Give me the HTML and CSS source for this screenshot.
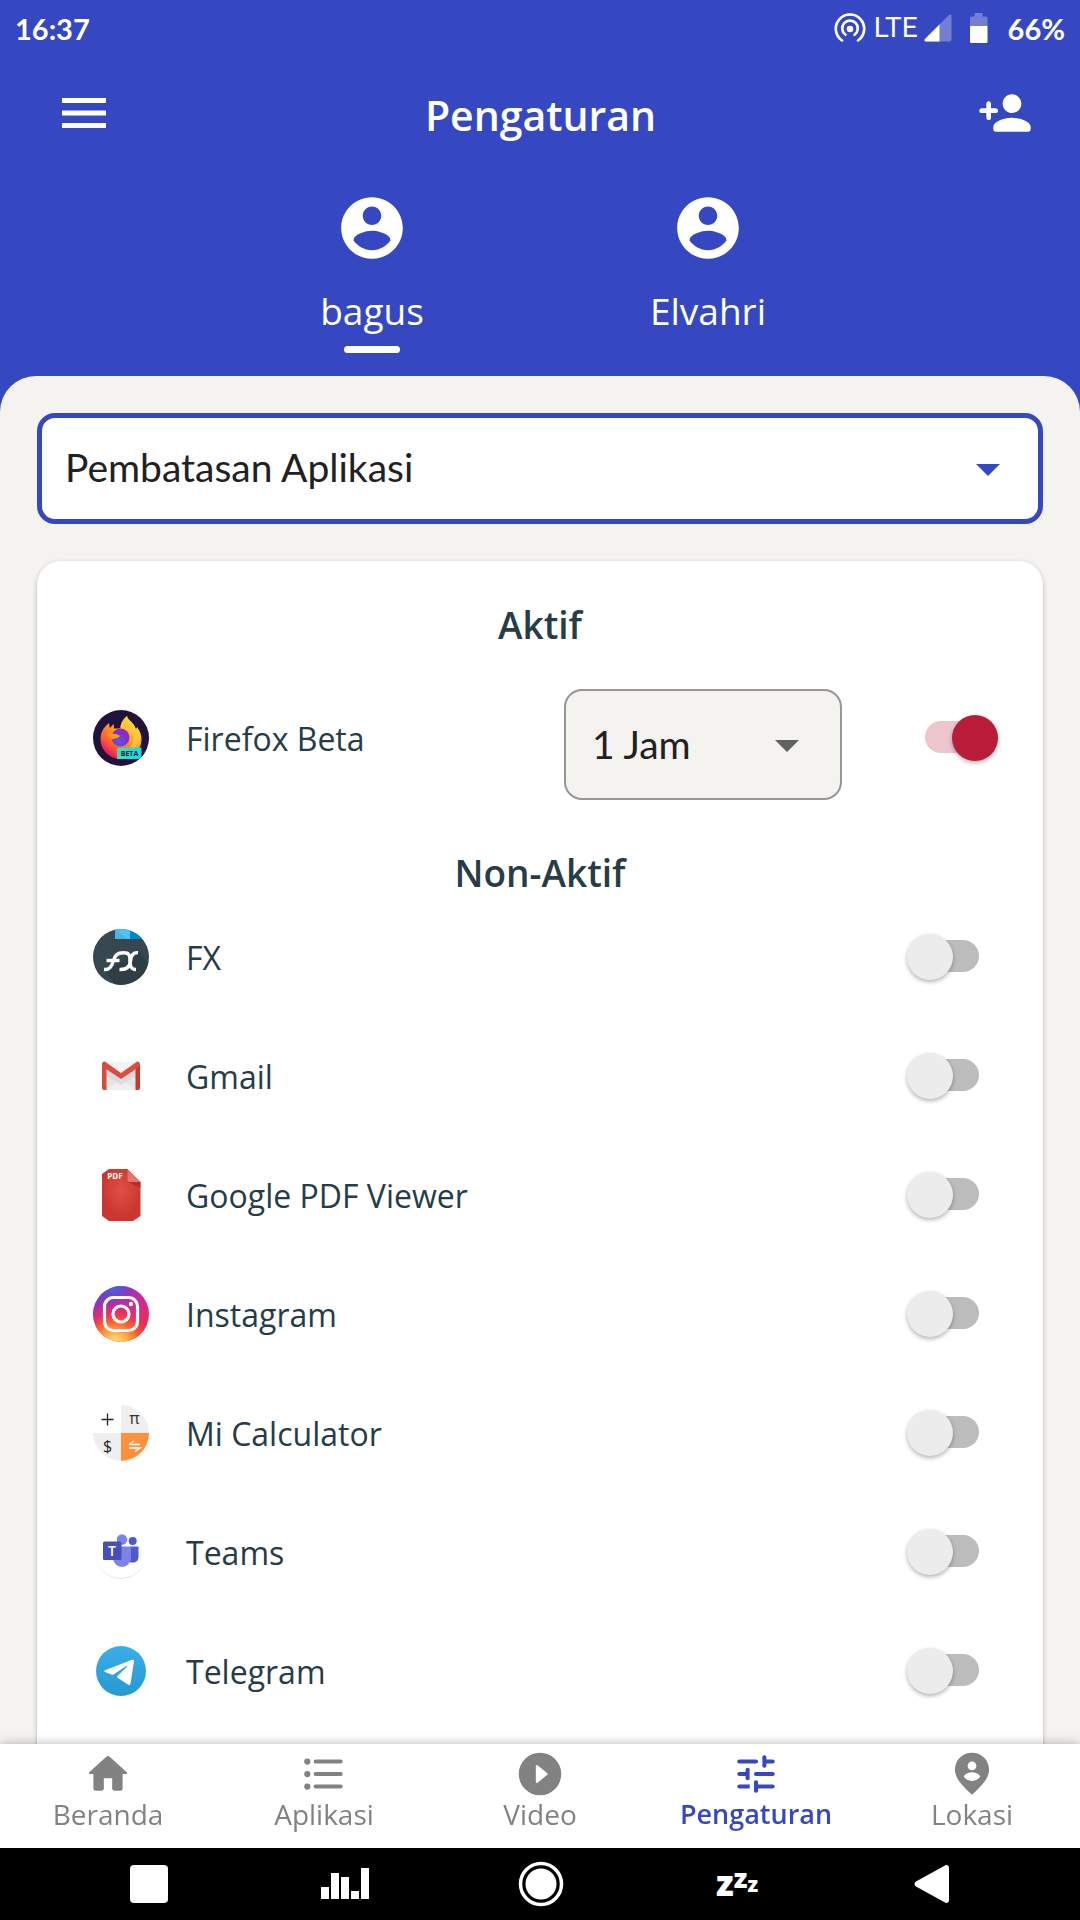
FILE: index.html
```html
<!DOCTYPE html>
<html lang="id">
<head>
<meta charset="utf-8">
<meta name="viewport" content="width=device-width, initial-scale=1">
<title>Pengaturan</title>
<link rel="stylesheet" href="styles.css">
</head>
<body>
<div class="app">
  <header class="header">
    <div class="status">
      <span class="status-time">16:37</span>
      <div class="status-icons">
        <svg class="hotspot" viewBox="0 0 32 32" aria-hidden="true"><g fill="none" stroke="#fff" stroke-width="2.600" stroke-linecap="round"><path d="M8 28.500a14.200 14.200 0 1 1 16 0"/><path d="M11.500 22.800a7.800 7.800 0 1 1 9 0"/></g><circle cx="16" cy="17" r="3.300" fill="#fff"/></svg>
        <span class="status-net">LTE</span>
        <svg class="signal" viewBox="0 0 28 28" aria-hidden="true"><path d="M27.500 2v23.500a2 2 0 0 1-2 2H2c-1.500 0-2-1.500-1-2.500L25 1c1-1 2.500-.5 2.500 1z" fill="#fff" opacity=".3"/><path d="M15.500 10.500v17H2c-1.500 0-2-1.500-1-2.500z" fill="#fff"/></svg>
        <svg class="battery" viewBox="0 0 18 30" aria-hidden="true"><path d="M4.500 0h8v3.500H16a1.500 1.500 0 0 1 1.500 1.500v8H0V5a1.500 1.500 0 0 1 1.500-1.500h3z" fill="#fff" opacity=".3"/><path d="M0 13h17.500v15.500a1.500 1.500 0 0 1-1.500 1.500H1.500A1.500 1.500 0 0 1 0 28.500z" fill="#fff"/></svg>
        <span class="status-level">66%</span>
      </div>
    </div>
    <div class="appbar">
      <button class="icon-button" type="button" aria-label="Menu">
        <svg class="menu-icon" viewBox="0 0 44 30"><path d="M0 0h44v5H0zM0 12.500h44v5H0zM0 25h44v5H0z" fill="#fff"/></svg>
      </button>
      <h1 class="title">Pengaturan</h1>
      <button class="icon-button" type="button" aria-label="Tambah anak">
        <svg class="add-icon" viewBox="0 0 24 24"><path fill="#fff" d="M15 12c2.210 0 4-1.790 4-4s-1.790-4-4-4-4 1.790-4 4 1.790 4 4 4zm-9-2V8c0-.55-.45-1-1-1s-1 .45-1 1v2H2c-.55 0-1 .45-1 1s.45 1 1 1h2v2c0 .55.45 1 1 1s1-.45 1-1v-2h2c.55 0 1-.45 1-1s-.45-1-1-1H6zm9 4c-2.670 0-8 1.340-8 4v1c0 .55.45 1 1 1h14c.55 0 1-.45 1-1v-1c0-2.660-5.330-4-8-4z"/></svg>
      </button>
    </div>
    <div class="profiles">
      <button class="profile profile-active" type="button">
        <svg class="avatar" viewBox="0 0 24 24"><path fill="#fff" d="M12 2C6.480 2 2 6.480 2 12s4.480 10 10 10 10-4.480 10-10S17.520 2 12 2zm0 3c1.660 0 3 1.340 3 3s-1.340 3-3 3-3-1.340-3-3 1.340-3 3-3zm0 14.200c-2.500 0-4.710-1.280-6-3.220.03-1.990 4-3.080 6-3.080 1.990 0 5.970 1.090 6 3.080-1.290 1.940-3.500 3.220-6 3.220z"/></svg>
        <span>bagus</span>
      </button>
      <button class="profile" type="button">
        <svg class="avatar" viewBox="0 0 24 24"><path fill="#fff" d="M12 2C6.480 2 2 6.480 2 12s4.480 10 10 10 10-4.480 10-10S17.520 2 12 2zm0 3c1.660 0 3 1.340 3 3s-1.340 3-3 3-3-1.340-3-3 1.340-3 3-3zm0 14.200c-2.500 0-4.710-1.280-6-3.220.03-1.990 4-3.080 6-3.080 1.990 0 5.970 1.090 6 3.080-1.290 1.940-3.500 3.220-6 3.220z"/></svg>
        <span>Elvahri</span>
      </button>
    </div>
  </header>

  <main class="sheet">
    <div class="picker">
      <select class="picker-field" aria-label="Jenis pengaturan"><option>Pembatasan Aplikasi</option></select>
      <svg class="arrow" viewBox="0 0 24 12" aria-hidden="true"><path d="M0 0h24L12 12z"/></svg>
    </div>

    <section class="card">
      <h2 class="section-title section-first">Aktif</h2>
      <div class="row">
        <svg class="app-icon" viewBox="0 0 56 56" aria-hidden="true">
          <defs>
            <linearGradient id="flame" x1=".8" y1=".1" x2=".2" y2=".9"><stop offset="0" stop-color="#ffdf3a"/><stop offset=".45" stop-color="#ff9a1f"/><stop offset=".8" stop-color="#ff5535"/><stop offset="1" stop-color="#e31567"/></linearGradient>
            <radialGradient id="globe" cx=".4" cy=".7"><stop offset="0" stop-color="#5a58e8"/><stop offset="1" stop-color="#8a28c8"/></radialGradient>
            <linearGradient id="tag"><stop offset="0" stop-color="#3fe0b0"/><stop offset="1" stop-color="#0fdcf0"/></linearGradient>
          </defs>
          <circle cx="28" cy="28" r="28" fill="#20123a"/>
          <path d="M28 49C16 49 7.500 40 7.500 28.500c0-6 3-11 8.500-15.500l.8 5 4-4 .2 4.500c3.500 0 5.500 0 6.500-.5 0-4.500 3-9 6.500-12 1.500 5 7 6 9 13l1-2c3 4 4.500 8 4.500 12C48.500 41 39.500 49 28 49z" fill="url(#flame)"/>
          <path d="M34 6c-4 3-6.500 7-6.500 12 8 0 13 5 13 12-.5 6-5 10-11 11 9 1 17-5 18-14-1-9-12-10-13.500-21z" fill="#ffc93c" opacity=".75"/>
          <circle cx="27.500" cy="27.500" r="9" fill="url(#globe)"/>
          <path d="M14 24c5-1 9-.5 13 2-2 3-6 2-7.500 3.500C17 28 15.500 26 14 24z" fill="#ff9a1f"/>
          <path d="M27 37.500h21.500v7.500a4 4 0 0 1-4 4H24v-8.500a3 3 0 0 1 3-3z" fill="url(#tag)"/>
          <text x="36.500" y="46" font-size="7" font-weight="700" text-anchor="middle" fill="#20123a">BETA</text>
        </svg>
        <label class="app-name" for="app-firefox">Firefox Beta</label>
        <div class="limit">
          <select class="limit-field" aria-label="Batas waktu Firefox Beta"><option>1 Jam</option></select>
          <svg class="arrow" viewBox="0 0 24 12" aria-hidden="true"><path d="M0 0h24L12 12z"/></svg>
        </div>
        <input class="switch" type="checkbox" role="switch" id="app-firefox" checked>
      </div>

      <h2 class="section-title section-next">Non-Aktif</h2>
      <div class="row">
        <svg class="app-icon" viewBox="0 0 56 56" aria-hidden="true">
          <defs><clipPath id="disc"><circle cx="28" cy="28" r="28"/></clipPath></defs>
          <g clip-path="url(#disc)">
            <path d="M0 0h56v56H0z" fill="#37474f"/>
            <path d="M45 23l11 11v22H22L12 42z" fill="#2f3e45"/>
            <path d="M22 0h16v10H22z" fill="#4fc3f7"/><path d="M22 0l12 10H22z" fill="#45b5ea"/>
            <path d="M37 0h14v10H37z" fill="#0288d1"/>
          </g>
          <g fill="none" stroke="#fff" stroke-width="3.400"><path d="M11 40.500c6 .5 7.500-3 9.500-9 1.700-5 3.500-8 10.500-7.800 6 0 6 3.800 6 8.300s1 8.700 6 8.500"/><path d="M13.500 31.500h13"/><path d="M45 23.700c-5.500-.5-7 3.300-7.500 8.300-.6 5.500-3.500 9-11 8.500"/></g>
        </svg>
        <label class="app-name" for="app-fx">FX</label>
        <input class="switch" type="checkbox" role="switch" id="app-fx">
      </div>
      <div class="row">
        <svg class="app-icon" viewBox="0 0 56 56" aria-hidden="true">
          <path d="M10 14h36v28H10z" fill="#e6e6e6"/><path d="M13 14h30L28 27z" fill="#f3f3f3"/><path d="M28 31l-15 11h30z" fill="#efefef"/><path d="M13 20l15 11 15-11v8l-15 9-15-9z" fill="#d2d2d2" opacity=".6"/>
          <path d="M9 17h4.500v25H11a2 2 0 0 1-2-2z" fill="#d54b3d"/><path d="M42.500 17H47v23a2 2 0 0 1-2 2h-2.500z" fill="#c0392b"/>
          <path d="M9 16c0-2 2-3 3.500-2L28 25l15.500-11c1.500-1 3.500 0 3.500 2 0 1.500-.5 2.500-1.500 3.200L28 31 10.500 19.200C9.500 18.500 9 17.500 9 16z" fill="#de4b3e"/>
        </svg>
        <label class="app-name" for="app-gmail">Gmail</label>
        <input class="switch" type="checkbox" role="switch" id="app-gmail">
      </div>
      <div class="row">
        <svg class="app-icon" viewBox="0 0 56 56" aria-hidden="true">
          <defs><radialGradient id="pdf" cy=".4"><stop offset="0" stop-color="#df5047"/><stop offset="1" stop-color="#cb372f"/></radialGradient></defs>
          <path d="M16 2h18.500L47.500 15v34L40 54H16l-7-5V7z" fill="url(#pdf)"/>
          <path d="M35 15h12.500v6z" fill="#a92a25" opacity=".7"/><path d="M34.500 2.500L47.500 15H37a2.500 2.500 0 0 1-2.500-2.500z" fill="#e57373"/>
          <text x="22" y="12" font-size="8" font-weight="700" text-anchor="middle" fill="#fff">PDF</text>
        </svg>
        <label class="app-name" for="app-pdf">Google PDF Viewer</label>
        <input class="switch" type="checkbox" role="switch" id="app-pdf">
      </div>
      <div class="row">
        <svg class="app-icon" viewBox="0 0 56 56" aria-hidden="true">
          <defs>
            <linearGradient id="ig" x1=".2" y1="0" x2=".7" y2="1"><stop offset="0" stop-color="#6a3bd0"/><stop offset=".4" stop-color="#c32aa3"/><stop offset=".8" stop-color="#e8305a"/></linearGradient>
            <radialGradient id="igWarm" cx=".4" cy="1.050" r=".8"><stop offset="0" stop-color="#ffe08a"/><stop offset=".2" stop-color="#ffc65c"/><stop offset=".5" stop-color="#ff6a2c"/><stop offset=".75" stop-color="#f0304e" stop-opacity=".6"/><stop offset="1" stop-color="#d62976" stop-opacity="0"/></radialGradient>
            <radialGradient id="igCool" cx=".35" cy="-.05" r=".45"><stop offset="0" stop-color="#2f7be8"/><stop offset="1" stop-color="#5a3fd0" stop-opacity="0"/></radialGradient>
          </defs>
          <circle cx="28" cy="28" r="28" fill="url(#ig)"/><circle cx="28" cy="28" r="28" fill="url(#igWarm)"/><circle cx="28" cy="28" r="28" fill="url(#igCool)"/>
          <g fill="none" stroke="#fff" stroke-width="3.200"><rect x="11.500" y="11.500" width="33" height="33" rx="9"/><circle cx="28" cy="28" r="8"/></g><circle cx="38" cy="18" r="2.200" fill="#fff"/>
        </svg>
        <label class="app-name" for="app-instagram">Instagram</label>
        <input class="switch" type="checkbox" role="switch" id="app-instagram">
      </div>
      <div class="row">
        <svg class="app-icon" viewBox="0 0 56 56" aria-hidden="true">
          <path d="M28 0a28 28 0 0 1 28 28H28zM28 56A28 28 0 0 1 0 28h28z" fill="#efefef"/><path d="M56 28a28 28 0 0 1-28 28V28z" fill="#ff8f3a"/>
          <path d="M8.500 14.500h12M14.500 8.500v12" stroke="#222" stroke-width="1.300"/>
          <text x="41.500" y="19" font-size="16" text-anchor="middle" fill="#333">π</text>
          <text x="14.500" y="46.500" font-size="16" text-anchor="middle" fill="#222">$</text>
          <path d="M36 39.500h11M36 39.500l5-3.500M36 43h11l-5 3.500" fill="none" stroke="#fff" stroke-width="1.500"/>
        </svg>
        <label class="app-name" for="app-calculator">Mi Calculator</label>
        <input class="switch" type="checkbox" role="switch" id="app-calculator">
      </div>
      <div class="row">
        <svg class="app-icon" viewBox="0 0 56 56" aria-hidden="true">
          <circle cx="28" cy="29.300" r="25.500" fill="#dcdcdc"/><circle cx="28" cy="28" r="26" fill="#fff"/>
          <circle cx="39.700" cy="17" r="4" fill="#5059c9"/><path d="M37 22.500h8.500v10c0 4-2.500 6-5.500 6h-3z" fill="#5059c9"/>
          <circle cx="29" cy="15.500" r="5.200" fill="#7b83eb"/><path d="M20 22.500h16a2 2 0 0 1 2 2V34a9 9 0 0 1-18 0z" fill="#7b83eb"/>
          <rect x="10" y="17.500" width="18.500" height="18.500" rx="1.500" fill="#464eb8"/>
          <text x="19" y="32" font-size="14" font-weight="600" text-anchor="middle" fill="#fff">T</text>
        </svg>
        <label class="app-name" for="app-teams">Teams</label>
        <input class="switch" type="checkbox" role="switch" id="app-teams">
      </div>
      <div class="row">
        <svg class="app-icon" viewBox="0 0 56 56" aria-hidden="true">
          <defs><linearGradient id="tg" x2="0" y2="1"><stop offset="0" stop-color="#3aaeea"/><stop offset="1" stop-color="#2799d0"/></linearGradient></defs>
          <circle cx="28" cy="28" r="25" fill="url(#tg)"/>
          <path d="M12 29c-1-.4-1-1.300 0-1.800L39 16.800c1.300-.5 2.200.2 2 1.700l-3.500 22c-.3 1.600-1.500 2-2.700 1.100L25 35c-1-.8-1-1.600-.2-2.400l9.200-8.900c.7-.8 0-1.200-.8-.7L20.500 31.500c-.7.4-1.400.4-2.200.1z" fill="#fff"/>
        </svg>
        <label class="app-name" for="app-telegram">Telegram</label>
        <input class="switch" type="checkbox" role="switch" id="app-telegram">
      </div>
    </section>
  </main>

  <nav class="tabs">
    <a class="tab" href="#beranda">
      <svg class="tab-icon" viewBox="0 0 24 24"><path d="M10 19v-5h4v5c0 .55.45 1 1 1h3c.55 0 1-.45 1-1v-7h1.700c.46 0 .68-.57.33-.87L12.670 3.600c-.38-.34-.96-.34-1.340 0l-8.360 7.530c-.34.3-.13.87.33.87H5v7c0 .55.45 1 1 1h3c.55 0 1-.45 1-1z"/></svg>
      <span>Beranda</span>
    </a>
    <a class="tab" href="#aplikasi">
      <svg class="tab-icon" viewBox="0 0 24 24"><circle cx="4" cy="6" r="1.500"/><circle cx="4" cy="12" r="1.500"/><circle cx="4" cy="18" r="1.500"/><path d="M8 6h12M8 12h12M8 18h12" stroke="currentColor" stroke-width="2" stroke-linecap="round"/></svg>
      <span>Aplikasi</span>
    </a>
    <a class="tab" href="#video">
      <svg class="tab-icon" viewBox="0 0 24 24"><path fill-rule="evenodd" d="M12 1.800a10.200 10.200 0 1 0 0 20.400 10.200 10.200 0 0 0 0-20.400zM10 8.200c0-.4.500-.6.800-.4l4.700 3.800c.3.200.3.600 0 .8l-4.700 3.800c-.3.200-.8 0-.8-.4z"/></svg>
      <span>Video</span>
    </a>
    <a class="tab tab-current" href="#pengaturan" aria-current="page">
      <svg class="tab-icon" viewBox="0 0 24 24"><path d="M4 6h8M16 6h4M16 4v4M4 12h4M8 10v4M12 12h8M4 18h5M12 18h8M12 16v4" fill="none" stroke="currentColor" stroke-width="2" stroke-linecap="round"/><path d="M13 4.500h2v3h-2zM9 10.500h2v3H9zM9 16.500h2v3H9z" fill="#fff"/></svg>
      <span>Pengaturan</span>
    </a>
    <a class="tab" href="#lokasi">
      <svg class="tab-icon" viewBox="0 0 24 24"><path fill-rule="evenodd" d="M12 1.800c-4.700 0-8.200 3.700-8.200 8.200 0 3.600 3 7.400 8.200 12 5.200-4.600 8.200-8.400 8.200-12 0-4.500-3.500-8.200-8.200-8.200zM12 6a2 2 0 1 1 0 4.200A2 2 0 0 1 12 6zM12 15.300c-1.700 0-3.200-.8-4-2.200.8-1.300 2.600-1.900 4-1.900s3.200.6 4 1.900c-.8 1.400-2.300 2.200-4 2.200z"/></svg>
      <span>Lokasi</span>
    </a>
  </nav>

  <div class="sysbar">
    <button class="sys" type="button" aria-label="Terbaru"><svg viewBox="0 0 60 48"><rect x="11" y="5" width="38" height="38" rx="4"/></svg></button>
    <button class="sys" type="button" aria-label="Volume"><svg viewBox="0 0 60 48"><path d="M6 27h8v12H6zM16 13h8v26h-8zM26 17h8v22h-8zM36 31h8v8h-8zM46 8h8v31h-8z"/></svg></button>
    <button class="sys" type="button" aria-label="Beranda sistem"><svg viewBox="0 0 60 48"><circle cx="30" cy="24" r="20.500" fill="none" stroke="#fff" stroke-width="3.500"/><circle cx="30" cy="24" r="15.500"/></svg></button>
    <button class="sys sleep" type="button"><span><span class="sleep-large">z</span><span class="sleep-medium">z</span><span class="sleep-small">z</span></span></button>
    <button class="sys" type="button" aria-label="Kembali"><svg viewBox="0 0 60 48"><path d="M13 21.500L42 5.500c2-1 4 0 4 2.500v32c0 2.500-2 3.500-4 2.500L13 26.500c-2-1-2-4 0-5z"/></svg></button>
  </div>
</div>
</body>
</html>
```

FILE: styles.css
```css
* {
  box-sizing: border-box;
}

body {
  margin: 0;
  font-family: "Open Sans", "Noto Sans", sans-serif;
  background: #3548c1;
}

svg {
  display: block;
  flex-shrink: 0;
}

button {
  padding: 0;
  border: 0;
  background: none;
  font: inherit;
  color: inherit;
}

.app {
  display: flex;
  flex-direction: column;
  height: 100vh;
}

.header {
  color: #fff;
}

/* Status bar */
.status {
  display: flex;
  justify-content: space-between;
  align-items: center;
  height: 56px;
  padding: 0 15px;
  font-family: Lato, sans-serif;
  font-size: 29px;
  font-weight: 700;
}

.status-icons {
  display: flex;
  align-items: center;
}

.hotspot {
  width: 32px;
  height: 32px;
  margin-right: 8px;
}

.status-net {
  margin-right: 6px;
  font-family: Roboto, sans-serif;
  font-size: 28px;
  font-weight: 400;
  line-height: 28px;
}

.signal {
  width: 28px;
  height: 28px;
  margin-right: 18px;
}

.battery {
  width: 18px;
  height: 30px;
  margin-right: 20px;
}

/* App bar */
.appbar {
  display: grid;
  grid-template-columns: 1fr auto 1fr;
  align-items: center;
  height: 114px;
  padding: 0 45px 0 54px;
}

.icon-button {
  display: grid;
  place-items: center;
  width: 60px;
  height: 60px;
}

.icon-button:last-child {
  justify-self: end;
}

.menu-icon {
  width: 44px;
  height: 30px;
}

.add-icon {
  width: 56px;
  height: 56px;
}

.title {
  margin: 0;
  padding: 4px 8px 0 0;
  font-size: 41px;
  font-weight: 600;
  line-height: 60px;
}

/* Profile switcher */
.profiles {
  display: flex;
  justify-content: center;
  padding: 21px 0 23px;
}

.profile {
  display: flex;
  flex-direction: column;
  align-items: center;
  gap: 9px;
  width: 336px;
  font-size: 37px;
  line-height: 52px;
}

.profile::after {
  content: "";
  width: 56px;
  height: 7px;
  border-radius: 4px;
}

.profile-active::after {
  background: #fff;
}

.avatar {
  width: 74px;
  height: 74px;
  margin-bottom: 11px;
}

/* Content sheet */
.sheet {
  flex: 1;
  min-height: 0;
  padding: 37px 37px 0;
  overflow-y: auto;
  scrollbar-width: none;
  border-radius: 36px 36px 0 0;
  background: #f5f3ef;
}

.picker,
.limit {
  display: grid;
  align-items: center;
}

.picker > *,
.limit > * {
  grid-area: 1 / 1;
}

.picker-field,
.limit-field {
  appearance: none;
  width: 100%;
  height: 111px;
  border-radius: 18px;
  color: #212121;
  font-family: Lato, sans-serif;
  font-size: 39px;
}

.picker-field {
  padding: 0 23px 4px;
  border: 5px solid #3548c1;
  background: #fff;
}

.limit-field {
  padding: 0 26px 2px;
  border: 2px solid #969696;
  background: #f5f3ef;
}

.arrow {
  justify-self: end;
  width: 24px;
  height: 12px;
  margin-top: 2px;
  margin-right: 43px;
  pointer-events: none;
  fill: #3548c1;
}

.limit .arrow {
  fill: #616161;
}

/* App list */
.card {
  margin-top: 37px;
  padding: 40px 0 48px;
  border-radius: 24px 24px 0 0;
  background: #fff;
  box-shadow: 0 2px 5px rgba(0, 0, 0, 0.25);
  color: #263c47;
}

.section-title {
  margin: 0;
  font-size: 37px;
  font-weight: 600;
  line-height: 48px;
  text-align: center;
}

.section-first {
  margin-bottom: 29px;
}

.section-next {
  margin-top: 52px;
}

.row {
  display: flex;
  align-items: center;
  min-height: 119px;
  padding: 0 64px 0 56px;
}

.app-icon {
  width: 56px;
  height: 56px;
  margin-right: 37px;
}

.app-name {
  flex: 1;
  padding-top: 3px;
  font-size: 32px;
  line-height: 44px;
}

.limit {
  align-self: flex-start;
  width: 278px;
  margin: 11px 83px -3px 0;
}

.switch {
  appearance: none;
  position: relative;
  width: 54px;
  height: 32px;
  margin: 0 0 2px;
  border-radius: 16px;
  background: #bcbcbc;
}

.switch::before {
  content: "";
  position: absolute;
  top: -6px;
  left: -18px;
  width: 46px;
  height: 46px;
  border-radius: 50%;
  background: #ececec;
  box-shadow: 0 2px 4px rgba(0, 0, 0, 0.3);
}

.switch:checked {
  background: #eec4cd;
}

.switch:checked::before {
  left: 27px;
  background: #b91c38;
}

/* Bottom tabs */
.tabs {
  position: relative;
  display: grid;
  grid-template-columns: repeat(5, 1fr);
  padding: 5px 0 19px;
  background: #fff;
  box-shadow: 0 0 10px rgba(0, 0, 0, 0.3);
}

.tab {
  display: flex;
  flex-direction: column;
  align-items: center;
  color: #828282;
  font-size: 28px;
  line-height: 30px;
  text-decoration: none;
}

.tab-current {
  color: #3548c1;
  font-size: 27px;
  font-weight: 600;
}

.tab-icon {
  width: 50px;
  height: 50px;
  fill: currentColor;
}

/* System navigation */
.sysbar {
  display: grid;
  grid-template-columns: repeat(5, 1fr);
  align-items: center;
  height: 72px;
  padding: 0 49px 0 51px;
  background: #000;
}

.sys {
  display: grid;
  place-items: center;
}

.sys svg {
  width: 60px;
  height: 48px;
  fill: #fff;
}

.sleep {
  color: #fff;
  font-weight: 800;
  line-height: 50px;
}

.sleep-large {
  font-size: 35px;
}

.sleep-medium {
  font-size: 27px;
  vertical-align: 8px;
}

.sleep-small {
  font-size: 21px;
  vertical-align: 4px;
}
```
